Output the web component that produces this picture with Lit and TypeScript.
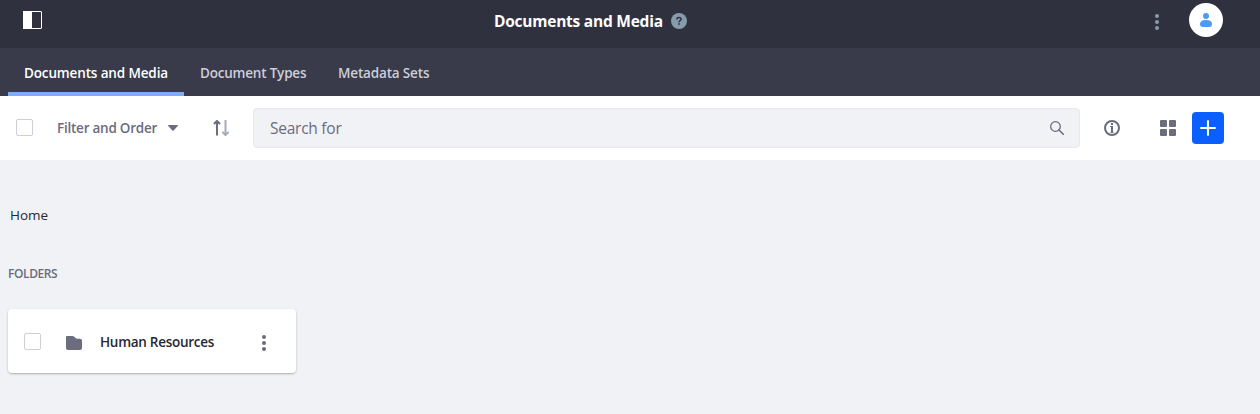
import { LitElement, html, css } from "lit";
import { customElement, state } from "lit/decorators.js";

@customElement("app-root")
class AppRoot extends LitElement {
  @state() private activeTab = 0;

  private tabs = ["Documents and Media", "Document Types", "Metadata Sets"];

  static styles = css`
    :host {
      display: block;
      min-height: 414px;
      background: #f1f2f5;
      font-family: "Open Sans", "Noto Sans", sans-serif;
      font-size: 14px;
      color: #272833;
    }
    * { box-sizing: border-box; }
    svg { display: block; flex: none; }
    button { font: inherit; border: 0; padding: 0; background: none; color: inherit; letter-spacing: inherit; }
    .control { display: grid; grid-template-columns: 471px auto 1fr; align-items: center; height: 48px; padding: 0 37px 8px 23px; background: #30313f; color: #fff; }
    .title { display: flex; align-items: center; gap: 8px; font-size: 15.5px; font-weight: 700; line-height: 24px; white-space: nowrap; letter-spacing: -0.24px; }
    .title span { width: 169px; padding-top: 1px; }
    .title svg { margin-top: 1px; }
    .user { display: flex; justify-content: flex-end; align-items: center; gap: 24px; }
    .user > svg { margin-top: 4px; }
    .avatar { width: 34px; height: 34px; border-radius: 50%; background: #fff; display: grid; place-items: center; }
    .tabs { display: flex; height: 48px; padding-left: 8px; background: #393a4a; }
    .tab { height: 48px; padding: 5px 0 0 16px; text-align: left; border-bottom: 4px solid transparent; font-size: 13.5px; letter-spacing: -0.16px; font-weight: 600; color: #cdced9; white-space: nowrap; }
    .tab.active { color: #fff; border-color: #80acff; }
    .tab0 { width: 176px; letter-spacing: -0.14px; }
    .tab1 { width: 138px; letter-spacing: -0.2px; }
    .toolbar { display: flex; align-items: center; height: 64px; padding: 0 36px 0 16px; background: #fff; color: #6b6c7e; }
    .check { width: 17px; height: 17px; border: 1px solid #cdced9; border-radius: 2px; background: #fff; flex: none; }
    .toolbar .check { margin-top: -1px; }
    .filter { display: flex; align-items: center; width: 122px; justify-content: space-between; margin-left: 24px; font-size: 13.5px; letter-spacing: -0.24px; font-weight: 600; white-space: nowrap; }
    .filter svg { margin-right: 1px; }
    .sort { margin: 0 24px 0 34px; }
    .search { display: flex; align-items: center; justify-content: space-between; flex: 1; height: 40px; padding: 0 15px 0 16px; border: 1px solid #e7e7ed; border-radius: 4px; background: #f1f2f5; font-size: 15.5px; letter-spacing: -0.25px; }
    .info { margin: 0 40px 0 24px; }
    .add { display: grid; place-items: center; width: 32px; height: 32px; margin-left: 16px; border-radius: 4px; background: #0b5fff; }
    main { padding: 44px 8px 0; }
    .crumb { padding-left: 2px; font-size: 13.5px; line-height: 22px; }
    h2 { margin: 36px 0 24px; font-size: 12px; letter-spacing: -0.4px; line-height: 23px; font-weight: 600; color: #6b6c7e; }
    .card { display: flex; align-items: center; width: 288px; height: 64px; padding: 0 24px 0 16px; background: #fff; border-radius: 4px; box-shadow: 0 1px 3px -1px rgba(0, 0, 0, 0.6); }
    .folder { margin: 3px 18px 0 25px; }
    .name { flex: 1; font-size: 13.5px; letter-spacing: -0.28px; font-weight: 600; padding-top: 1px; }
    .more { margin-top: 3px; }
  `;

  private dots(color: string) {
    return html`<svg width="16" height="16" viewBox="0 0 16 16" fill=${color}><circle cx="8" cy="2" r="2"/><circle cx="8" cy="8" r="2"/><circle cx="8" cy="14" r="2"/></svg>`;
  }

  render() {
    return html`
      <header class="control">
        <svg width="19" height="18" viewBox="0 0 19 18"><rect x=".5" y=".5" width="18" height="17" rx=".5" fill="none" stroke="#fff"/><path d="M0 0h9v18H0z" fill="#fff"/></svg>
        <div class="title"><span>Documents and Media</span>
          <svg width="16" height="16" viewBox="0 0 16 16"><circle cx="8" cy="8" r="8" fill="#869cad"/><path d="M5.900 6.400C5.900 5 6.800 4.400 8 4.400s2.100.7 2.100 1.800c0 1.500-2 1.500-2 3" fill="none" stroke="#30313f" stroke-width="1.500"/><path d="M7.200 10.200h1.700v1.600H7.200z" fill="#30313f"/></svg>
        </div>
        <div class="user">${this.dots("#869cad")}
          <div class="avatar"><svg width="12" height="14" viewBox="0 0 12 14" fill="#4b9bff"><circle cx="6" cy="3" r="3"/><path d="M0 11c0-2.500 2.300-4 6-4s6 1.500 6 4c0 2-1 3-2.500 3h-7C1 14 0 13 0 11z"/></svg></div>
        </div>
      </header>
      <nav class="tabs">
        ${this.tabs.map((t, i) => html`<button class="tab tab${i} ${i === this.activeTab ? "active" : ""}" @click=${() => (this.activeTab = i)}>${t}</button>`)}
      </nav>
      <div class="toolbar">
        <span class="check"></span>
        <div class="filter"><span>Filter and Order</span><svg width="10" height="6" viewBox="0 0 11 6" preserveAspectRatio="none"><path d="M.7 0h9.600q.9.200.4.900L6.200 5.600q-.7.600-1.400 0L.3.900Q-.2.200.7 0z" fill="#6b6c7e"/></svg></div>
        <svg class="sort" width="16" height="16" viewBox="0 0 16 16" fill="none" stroke-linecap="round" stroke-linejoin="round" stroke-width="2"><path d="M4 15.500V2" stroke="#6b6c7e" stroke-linecap="butt"/><path d="M1.500 3.500L4 1l2.500 2.500" stroke="#6b6c7e"/><path d="M12.500 0v14" stroke="#a7a9bc" stroke-linecap="butt"/><path d="M10 12.500l2.500 2.500 2.500-2.500" stroke="#a7a9bc"/></svg>
        <div class="search"><span>Search for</span><svg width="14" height="14" viewBox="0 0 14 14" fill="none" stroke="#6b6c7e" stroke-width="1.300"><circle cx="5.500" cy="5.500" r="4.800"/><path d="M9 9l4.300 4.300" stroke-width="1.600" stroke-linecap="round"/></svg></div>
        <svg class="info" width="16" height="16" viewBox="0 0 16 16"><circle cx="8" cy="8" r="7" fill="none" stroke="#6b6c7e" stroke-width="2"/><path d="M7 3h2v2H7zM6 6h3v6H7V7H6zM6.500 12h3v1h-3z" fill="#6b6c7e"/></svg>
        <svg width="16" height="16" viewBox="0 0 16 16" fill="#6b6c7e"><rect width="7" height="7" rx="1"/><rect x="9" width="7" height="7" rx="1"/><rect y="9" width="7" height="7" rx="1"/><rect x="9" y="9" width="7" height="7" rx="1"/></svg>
        <button class="add" aria-label="Add"><svg width="16" height="16" viewBox="0 0 16 16"><path d="M8 1v14M1 8h14" stroke="#fff" stroke-width="2" stroke-linecap="round"/></svg></button>
      </div>
      <main>
        <div class="crumb">Home</div>
        <h2>FOLDERS</h2>
        <div class="card">
          <span class="check"></span>
          <svg class="folder" width="16" height="14" viewBox="0 0 16 14"><path d="M0 1q0-1 1-1h5.500q1 0 1.700.7L9.500 2q.8.800 2 .8H14q2 0 2 2V12q0 2-2 2H2q-2 0-2-2z" fill="#6b6c7e"/></svg>
          <span class="name">Human Resources</span>
          <span class="more">${this.dots("#6b6c7e")}</span>
        </div>
      </main>
    `;
  }
}
